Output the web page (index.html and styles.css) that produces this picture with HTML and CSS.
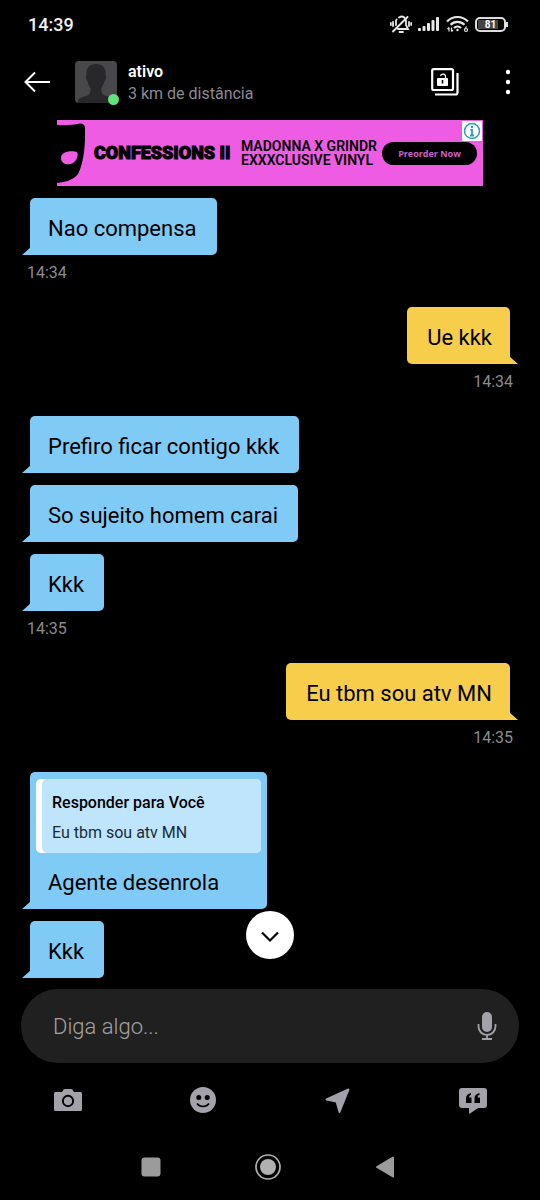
FILE: index.html
```
<!DOCTYPE html>
<html lang="pt-BR">
<head>
<meta charset="utf-8">
<meta name="viewport" content="width=device-width, initial-scale=1">
<title>ativo</title>
<link rel="stylesheet" href="styles.css">
</head>
<body>
<div class="app">
  <div class="status">
    <span class="clock">14:39</span>
    <div class="status-icons">
      <svg width="22" height="20" viewBox="0 0 22 20" fill="none" stroke="#e8e8e8" stroke-width="1.800" stroke-linecap="round">
        <path d="M9 3.500C13 .8 16 4 16 7.500V11l2 4H8M6 11V7.500c0-.8.1-1.500.5-2M9.500 18h3.500M3 17.500 17.500 3M3 8v4M.8 9v2M19 8v4M21.200 9v2"/>
      </svg>
      <svg width="22" height="15" viewBox="0 0 22 15" fill="#e8e8e8">
        <rect x="0" y="11" width="3" height="3" rx="1"/><rect x="4.500" y="9" width="3" height="5" rx="1"/><rect x="9" y="6" width="3" height="8" rx="1"/><rect x="13.500" y="3" width="3" height="11" rx="1"/><rect x="18" y="0" width="3" height="14" rx="1"/>
      </svg>
      <svg width="23" height="18" viewBox="0 0 23 18" fill="none" stroke="#e8e8e8" stroke-width="2.200">
        <path d="M1 6.500C7 .5 16 .5 22 6.500M4.500 9.800c4-4 10-4 14 0M8 13c2-2 5-2 7 0"/>
        <circle cx="11.500" cy="15" r="1.200" fill="#e8e8e8" stroke="none"/>
        <path d="M3 16.500v-4M1.500 14l1.500-1.500M5.500 12.500v4M7 15l-1.500 1.500M20.500 11.500l-1.500 2.500" stroke-width="1.200"/>
        <circle cx="20" cy="15" r="1.500" stroke-width="1.200"/>
      </svg>
      <span class="battery"><span class="battery-level">81</span></span>
    </div>
  </div>

  <header class="header">
    <button class="icon-btn" aria-label="Voltar">
      <svg width="26" height="22" viewBox="0 0 26 22" fill="none" stroke="#fff" stroke-width="2"><path d="M26 11H1.500M11 1.500 1.500 11l9.500 9.500"/></svg>
    </button>
    <div class="avatar">
      <svg viewBox="0 0 42 42" width="42" height="42"><rect width="42" height="42" rx="4" fill="#48484b"/><path d="M21 3c-7 0-10 4.500-9.500 10 0 2-.8 2-.5 4 .3 2 1 2.500 1.500 3.500.8 4 2.500 5.500 3 7 .3 4-1 6.500-4 7.500-4 1-7 1.500-8.500 4.500V42h34v-5c-2-1.500-5-2-7-2.500-3-1-4-3.500-3.500-7.500.5-1.500 2-3 3-6.500.5-1 1.200-1.500 1.500-3.500.3-2-.5-2-.5-4C31 7.500 28 3 21 3z" fill="#28282a"/></svg>
      <span class="online"></span>
    </div>
    <div class="who">
      <h1 class="name">ativo</h1>
      <p class="distance">3 km de distância</p>
    </div>
    <button class="icon-btn" aria-label="Álbuns">
      <svg width="28" height="28" viewBox="0 0 28 28" fill="none" stroke="#fff" stroke-width="2.200"><rect x="1.200" y="1.200" width="20.800" height="20.800" rx="1.500"/><path d="M26.500 5v19.500a2 2 0 0 1-2 2H4"/><path d="M9.500 8c1-2.800 5-2.300 5 .8V11" stroke-width="1.300"/><rect x="6" y="10" width="11" height="8" rx="1" fill="#fff" stroke="none"/><path d="M11.500 12v3.500" stroke="#000" stroke-width="1.600"/></svg>
    </button>
    <button class="icon-btn more" aria-label="Mais opções">
      <svg width="6" height="26" viewBox="0 0 6 26" fill="#fff"><circle cx="3" cy="3" r="2.200"/><circle cx="3" cy="13" r="2.200"/><circle cx="3" cy="23" r="2.200"/></svg>
    </button>
  </header>

  <aside class="ad">
    <svg class="mask" width="28" height="66" viewBox="0 0 28 66"><path d="M0 5c8 .5 17 0 23-1.500 3 0 5 1.500 5 4.500.5 16-1 32-6 44-3 7-12 10-22 11z" fill="#000"/><path d="M4 38c0-5 6-7.500 14-6.500 4 .5 3 5 1 8.500-3 6-15 6-15-2z" fill="#ee5ce4"/></svg>
    <strong class="ad-title">CONFESSIONS II</strong>
    <p class="ad-text">MADONNA X GRINDR<br>EXXXCLUSIVE VINYL</p>
    <button class="ad-cta">Preorder Now</button>
    <button class="ad-info" aria-label="Informações do anúncio">
      <svg width="20" height="20" viewBox="0 0 20 20" fill="none" stroke="#2a9db5" stroke-width="1.500"><circle cx="10" cy="10" r="7.500"/><path d="M8.500 9H10v5.500M8 14.500h4" stroke-width="1.800"/><circle cx="10" cy="6" r="1.200" fill="#2a9db5" stroke="none"/></svg>
    </button>
  </aside>

  <main class="chat">
    <div class="msg in">Nao compensa</div>
    <time class="time">14:34</time>
    <div class="msg out">Ue kkk</div>
    <time class="time end">14:34</time>
    <div class="msg in">Prefiro ficar contigo kkk</div>
    <div class="msg in">So sujeito homem carai</div>
    <div class="msg in">Kkk</div>
    <time class="time">14:35</time>
    <div class="msg out">Eu tbm sou atv MN</div>
    <time class="time end">14:35</time>
    <div class="msg in reply">
      <blockquote class="quote">
        <div class="quote-body">
          <p class="quote-title">Responder para Você</p>
          <p class="quote-text">Eu tbm sou atv MN</p>
        </div>
      </blockquote>
      Agente desenrola
    </div>
    <div class="msg in">Kkk</div>
    <button class="to-end" aria-label="Ir para o fim">
      <svg width="18" height="12" viewBox="0 0 18 12" fill="none" stroke="#000" stroke-width="2.200"><path d="m1 1.500 8 8 8-8"/></svg>
    </button>
  </main>

  <div class="composer">
    <input class="field" type="text" placeholder="Diga algo..." aria-label="Mensagem">
    <button class="icon-btn" aria-label="Gravar áudio">
      <svg width="20" height="30" viewBox="0 0 20 30" fill="none" stroke="#a3a2ab" stroke-width="1.800"><rect x="5" y="1" width="10" height="20" rx="5" fill="#a3a2ab" stroke="none"/><path d="M1.500 13v2.500a8.500 8.500 0 0 0 17 0V13M10 24v4M5 28h10"/></svg>
    </button>
  </div>

  <div class="tools">
    <button class="icon-btn" aria-label="Câmera">
      <svg width="28" height="28" viewBox="0 0 28 28"><path d="M1.500 6H8l1.500-2.300Q10 3 11 3h6q1 0 1.500.7L20 6h6.500Q28 6 28 7.500v16q0 1.500-1.500 1.500h-25Q0 25 0 23.500v-16Q0 6 1.500 6z" fill="#a3a2ab"/><circle cx="14" cy="15" r="5.200" fill="none" stroke="#000" stroke-width="1.900"/></svg>
    </button>
    <button class="icon-btn" aria-label="Figurinhas">
      <svg width="28" height="28" viewBox="0 0 28 28"><circle cx="14" cy="14" r="13" fill="#a3a2ab"/><circle cx="9.800" cy="11.500" r="2.500"/><circle cx="18.200" cy="11.500" r="2.500"/><path d="M8 17.500c3 4 9 4 12 0" fill="none" stroke="#000" stroke-width="1.600"/></svg>
    </button>
    <button class="icon-btn" aria-label="Localização">
      <svg width="28" height="28" viewBox="0 0 28 28"><path d="M2.500 13.500 24.500 3.500 15.500 26l-3-10.500z" fill="#a3a2ab" stroke="#a3a2ab" stroke-width="2" stroke-linejoin="round"/></svg>
    </button>
    <button class="icon-btn" aria-label="Frases salvas">
      <svg width="28" height="28" viewBox="0 0 28 28"><path d="M3 2h22q3 0 3 3v14q0 3-3 3h-6l-8 5.500q-1 .5-1-.7V22H3q-3 0-3-3V5q0-3 3-3z" fill="#a3a2ab"/><path d="M7 17v-4.500Q7 8 12 7v1.700q-2 .8-2 2.800h2.500V17zM15.500 17v-4.500q0-4.500 5-5.500v1.700q-2 .8-2 2.800H21V17z"/></svg>
    </button>
  </div>

  <nav class="nav">
    <button class="icon-btn" aria-label="Recentes"><svg width="26" height="26" viewBox="0 0 26 26"><rect x="3.500" y="3.500" width="19" height="19" rx="3" fill="#9b9b9b"/></svg></button>
    <button class="icon-btn" aria-label="Início"><svg width="26" height="26" viewBox="0 0 26 26"><circle cx="13" cy="13" r="12" fill="none" stroke="#b0b0b0" stroke-width="1.700"/><circle cx="13" cy="13" r="8" fill="#b0b0b0"/></svg></button>
    <button class="icon-btn" aria-label="Voltar ao anterior"><svg width="26" height="26" viewBox="0 0 26 26"><path d="M21 3.500v19L5 13z" fill="#9b9b9b" stroke="#9b9b9b" stroke-width="2" stroke-linejoin="round"/></svg></button>
  </nav>
</div>
</body>
</html>
```

FILE: styles.css
```
* { box-sizing: border-box; margin: 0; }
body { background: #000; color: #000; font-family: Roboto, "Noto Sans", sans-serif; }
button { border: 0; padding: 0; font: inherit; cursor: pointer; }
svg { display: block; flex: none; }

.app { display: flex; flex-direction: column; min-height: 100vh; }
.icon-btn { display: flex; align-items: center; justify-content: center; background: none; }

.status { display: flex; align-items: center; justify-content: space-between; height: 48px; padding: 0 32px 0 28px; color: #f2f2f2; }
.clock { padding-top: 2px; font: 500 18px/24px Roboto, sans-serif; }
.status-icons { display: flex; align-items: center; gap: 6px; margin-right: 2px; }
.battery { position: relative; display: flex; width: 31px; height: 15px; padding: 1px; border: 2px solid #dcdcdc; border-radius: 5px; }
.battery::after { content: ""; position: absolute; top: 3px; right: -4px; width: 2px; height: 5px; background: #dcdcdc; }
.battery-level { width: 100%; background: linear-gradient(90deg, #444 81%, transparent 81%); color: #fff; font: 700 10px/10px Roboto, sans-serif; text-align: center; }

.header { display: flex; align-items: center; height: 68px; padding: 0 29px 0 24px; }
.avatar { position: relative; margin-left: 25px; }
.online { position: absolute; right: -2px; bottom: -2px; width: 11px; height: 11px; border-radius: 50%; background: #5fe37d; }
.who { flex: 1; margin-left: 11px; padding-top: 2px; }
.name { color: #fff; font-size: 16px; font-weight: 600; line-height: 22px; }
.distance { color: #8b8b90; font-size: 16px; line-height: 22px; }
.more { margin-left: 46px; }

.ad { position: relative; display: flex; align-items: center; align-self: center; width: 426px; max-width: 100%; height: 66px; margin: 4px 0 12px; background: #ee5ce4; }
.ad-title { flex: none; width: 136px; margin-left: 9px; font: 900 18px/28px Roboto, sans-serif; white-space: nowrap; -webkit-text-stroke: 1px #000; }
.ad-text { flex: none; width: 133px; margin-left: 11px; font: 600 14px/14px Roboto, sans-serif; white-space: nowrap; }
.ad-cta { width: 95px; height: 23px; margin-left: 8px; border-radius: 12px; background: #000; color: #cf62c8; font: 700 9px/23px "Open Sans", sans-serif; }
.ad-info { position: absolute; top: 1px; right: 1px; background: #fff; }

.chat { position: relative; flex: 1; display: flex; flex-direction: column; align-items: flex-start; gap: 12px; padding: 0 30px 11px; }
.msg { position: relative; padding: 17px 20px 12px 18px; border-radius: 5px; font-size: 22px; line-height: 28px; }
.in { background: #80caf6; border-bottom-left-radius: 0; }
.out { align-self: flex-end; padding: 17px 18px 12px 20px; background: #f7ce4c; border-bottom-right-radius: 0; }
.msg::after { content: ""; position: absolute; bottom: 0; width: 9px; height: 8px; background: inherit; }
.in::after { left: -8px; clip-path: polygon(100% 0, 100% 100%, 0 100%); }
.out::after { right: -8px; clip-path: polygon(0 0, 100% 100%, 0 100%); }
.time { margin: -4px -3px 0; color: #8b8b90; font-size: 16px; line-height: 20px; padding-bottom: 12px; }
.end { align-self: flex-end; }

.reply { padding-top: 7px; }
.quote { width: 225px; margin: 0 -14px 16px -12px; border-radius: 5px; background: #fff; overflow: hidden; }
.quote-body { margin-left: 6px; padding: 13px 10px 9px; border-radius: 5px 0 0 5px; background: #bee5fb; font-size: 16px; line-height: 22px; }
.quote-title { font-weight: 500; }
.quote-text { margin-top: 8px; color: #1b2b36; }

.to-end { position: absolute; left: 50%; bottom: 30px; display: flex; align-items: center; justify-content: center; width: 48px; height: 48px; margin-left: -24px; padding-top: 4px; border-radius: 50%; background: #fff; }

.composer { display: flex; align-items: center; height: 74px; margin: 0 21px; padding: 0 22px 0 32px; border-radius: 37px; background: #202020; }
.field { flex: 1; min-width: 0; padding: 2px 0 0; border: 0; outline: 0; background: none; color: #fff; font: 300 22px/28px Roboto, sans-serif; }
.field::placeholder { color: #a3a3a7; opacity: 1; }

.tools { display: grid; grid-template-columns: repeat(4, 1fr); height: 74px; align-items: center; }
.nav { display: flex; justify-content: center; gap: 91px; height: 63px; padding: 0 4px 4px 0; }
```
